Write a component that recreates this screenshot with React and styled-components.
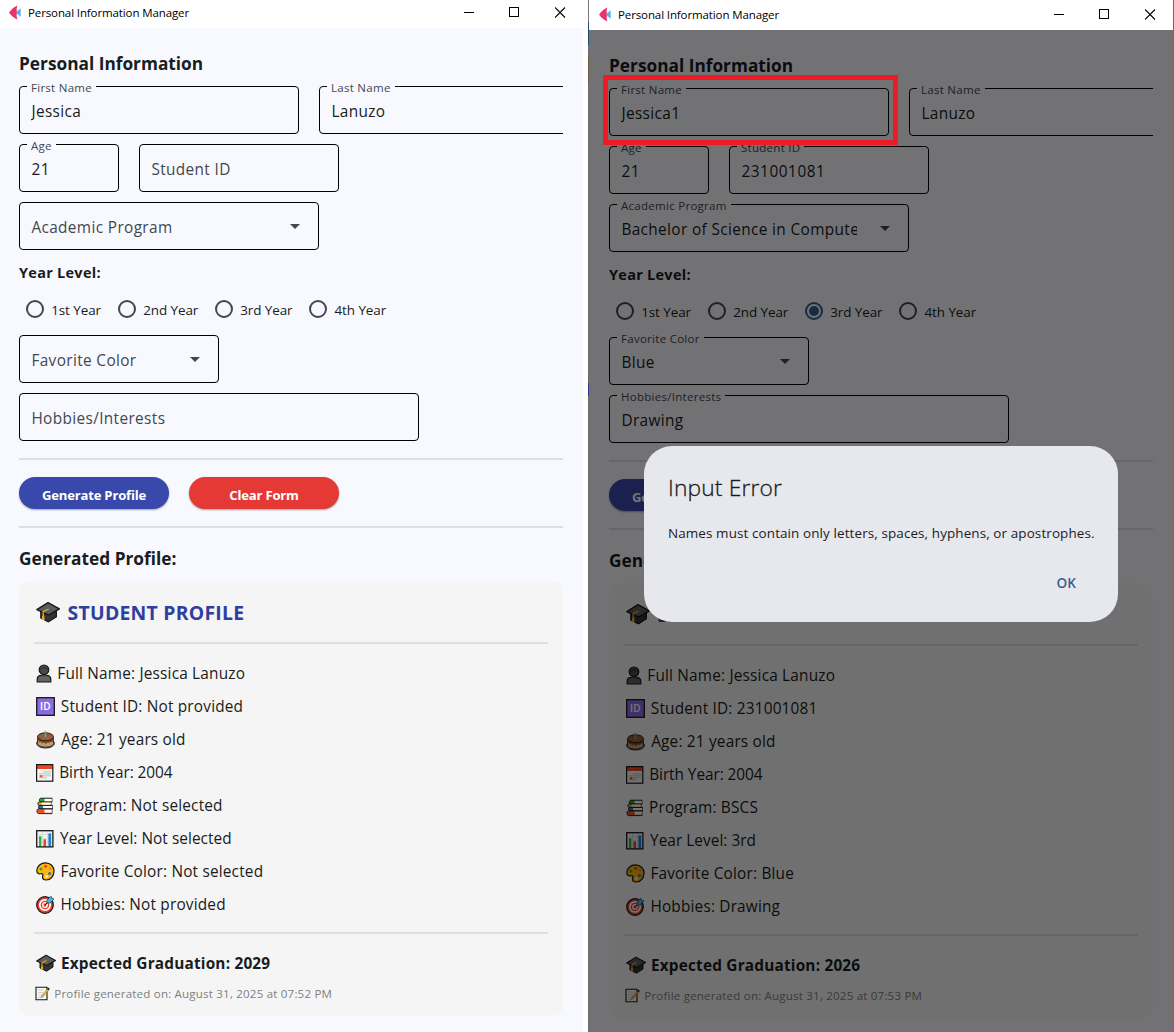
import React from "react";
import styled, { createGlobalStyle, css } from "styled-components";

const Global = createGlobalStyle`
  * { box-sizing: border-box; }
  body { margin: 0; background: #ffffff; }
`;

const Screen = styled.main`
  position: relative;
  display: flex;
  gap: 5px;
  width: 1174px;
  height: 1032px;
  overflow: hidden;
  background: #ffffff;
  color: #191c20;
  font-family: "Open Sans", "Noto Sans", sans-serif;
  font-weight: 400;
  white-space: nowrap;
`;

const WindowFrame = styled.section`
  display: flex;
  flex-direction: column;
  width: ${(p) => (p.$framed ? 586 : 583)}px;
  height: 1032px;
  flex: none;
  ${(p) =>
    p.$framed &&
    css`
      padding: 0 1px 0 1px;
      background:
        linear-gradient(#6b6b6e, #6b6b6e) right / 1px 100% no-repeat,
        linear-gradient(
          #77777a 0 22px,
          #1d4c74 22px 45px,
          #6b6b6e 45px 55px,
          #6f5a44 55px 83px,
          #6b6b6e 83px 383px,
          #33388a 383px 396px,
          #6b6b6e 396px
        );
    `}
`;

const TitleBar = styled.header`
  display: flex;
  align-items: center;
  flex: none;
  height: ${(p) => (p.$framed ? 30 : 28)}px;
  padding: 0 0 ${(p) => (p.$framed ? 1 : 3)}px ${(p) => (p.$framed ? 10 : 9)}px;
  background: #ffffff;
  color: #000000;
`;

const TitleText = styled.span`
  flex: 1;
  margin-left: 7px;
  font-size: 11.52px;
  letter-spacing: -0.12px;
  line-height: 16px;
`;

const ControlButton = styled.span`
  display: flex;
  justify-content: center;
  align-items: center;
  width: 46px;
  height: 25px;
`;

const Page = styled.div`
  position: relative;
  display: flex;
  flex-direction: column;
  gap: 10px;
  flex: 1;
  min-height: 0;
  overflow: hidden;
  padding: 23px 20px 0 ${(p) => (p.$framed ? 20 : 19)}px;
  background: #f8f9ff;
`;

const Scrim = styled.div`
  position: absolute;
  inset: 0;
  background: rgba(0, 0, 0, 0.54);
`;

const Heading = styled.h2`
  margin: 0;
  height: ${(p) => p.$h}px;
  line-height: ${(p) => p.$h + (p.$drop || 0)}px;
  font-size: ${(p) => p.$size}px;
  font-weight: 700;
  letter-spacing: ${(p) => p.$ls || 0}px;
`;

const FieldRow = styled.div`
  display: flex;
  gap: 20px;
  height: 48px;
  width: 544px;
  ${(p) => p.$clipped && "overflow-x: clip;"}
`;

const FieldBox = styled.div`
  position: relative;
  display: flex;
  align-items: center;
  justify-content: space-between;
  flex: none;
  width: ${(p) => p.$w}px;
  height: 48px;
  padding: 3px 18px 0 11.4px;
  border: 1px solid #000000;
  border-radius: 4px;
`;

const FloatingLabel = styled.span`
  position: absolute;
  left: 7px;
  top: -8px;
  padding: 0 4px;
  background: #f8f9ff;
  color: #43474e;
  font-size: 11.52px;
  letter-spacing: 0.27px;
  line-height: 18px;
`;

const FieldText = styled.span`
  overflow: hidden;
  color: ${(p) => (p.$hint ? "#43474e" : "#191c20")};
  font-size: 15.36px;
  letter-spacing: ${(p) => (p.$digits ? 0.55 : 0.37)}px;
  line-height: 24px;
  ${(p) => p.$clip && `width: ${p.$clip}px;`}
`;

const ArrowIcon = styled.svg`
  flex: none;
  width: 10px;
  height: 5px;
  margin-top: -2px;
`;

const RadioGroup = styled.div`
  display: grid;
  grid-template-columns: 92px 97px 94.3px auto;
  align-items: center;
  height: 32px;
`;

const RadioOption = styled.label`
  display: flex;
  align-items: center;
  padding-left: 7px;
  font-size: 13.44px;
  letter-spacing: -0.08px;
  line-height: 20px;
`;

const RadioDot = styled.span`
  display: flex;
  align-items: center;
  justify-content: center;
  width: 18px;
  height: 18px;
  margin-right: 7.2px;
  border: 2px solid ${(p) => (p.$on ? "#36618e" : "#43474e")};
  border-radius: 50%;
  &::after {
    content: "";
    width: 10px;
    height: 10px;
    border-radius: 50%;
    background: ${(p) => (p.$on ? "#36618e" : "transparent")};
  }
`;

const RadioText = styled.span`
  padding-top: 2px;
`;

const Divider = styled.hr`
  flex: none;
  width: 100%;
  height: 2px;
  margin: ${(p) => p.$m || "7px 0"};
  border: 0;
  background: #dedfe5;
`;

const ButtonRow = styled.div`
  display: flex;
  gap: 20px;
`;

const PillButton = styled.button`
  width: 150px;
  height: 32px;
  padding: 3px 0 0;
  border: 0;
  border-radius: 16px;
  background: ${(p) => p.$bg};
  color: #ffffff;
  box-shadow: 0 1px 2px rgba(0, 0, 0, 0.35);
  font-family: inherit;
  font-size: 13.1px;
  font-weight: 700;
  letter-spacing: -0.2px;
`;

const ProfileCard = styled.article`
  display: flex;
  flex-direction: column;
  flex: none;
  width: 544px;
  height: 435px;
  padding: 15px;
  border-radius: 10px;
  background: #f5f5f5;
`;

const ProfileTitle = styled.h3`
  display: flex;
  align-items: center;
  flex: none;
  margin: 0 0 14px;
  height: 32px;
  padding-left: 2px;
  color: #303f9f;
  font-size: 19.4px;
  font-weight: 700;
  letter-spacing: 0.24px;
`;

const InfoLine = styled.div`
  display: flex;
  align-items: center;
  flex: none;
  height: 33px;
  font-size: 15.36px;
  letter-spacing: ${(p) => (p.$ls === undefined ? 0.19 : p.$ls)}px;
`;

const GraduationLine = styled(InfoLine)`
  height: 30px;
  font-weight: 700;
`;

const StampLine = styled(InfoLine)`
  height: 16px;
  margin-top: 7px;
  color: #808080;
  font-size: 11.52px;
  letter-spacing: 0.21px;
`;

const IconSlot = styled.span`
  display: flex;
  align-items: center;
  flex: none;
  width: ${(p) => p.$w}px;
  padding-left: ${(p) => (p.$pad === undefined ? 2 : p.$pad)}px;
`;

const Glyph = styled.svg`
  flex: none;
  width: ${(p) => p.$w || 20}px;
  height: ${(p) => p.$h || p.$w || 20}px;
`;

const Highlight = styled.div`
  position: absolute;
  left: 603px;
  top: 75px;
  width: 295px;
  height: 70px;
  border: 5px solid #ed1c24;
`;

const Dialog = styled.div`
  position: absolute;
  left: 644px;
  top: 446px;
  display: flex;
  flex-direction: column;
  width: 474px;
  height: 176px;
  padding: 24px 24px 19px;
  border-radius: 28px;
  background: #e7e8ee;
`;

const DialogTitle = styled.h2`
  margin: 0;
  font-size: 22.8px;
  font-weight: 300;
  letter-spacing: 0.15px;
  line-height: 36px;
  -webkit-text-stroke: 0.3px #191c20;
`;

const DialogText = styled.p`
  margin: 17px 0 0;
  font-size: 13.44px;
  letter-spacing: 0.11px;
  line-height: 20px;
`;

const DialogActions = styled.div`
  display: flex;
  justify-content: flex-end;
  margin-top: auto;
`;

const TextButton = styled.button`
  padding: 0 18px;
  border: 0;
  background: transparent;
  color: #36618e;
  font-family: inherit;
  font-size: 13.6px;
  font-weight: 600;
  line-height: 40px;
`;

const K = "#161616";

const AppLogo = () => (
  <Glyph $w={12} $h={15} viewBox="0 0 12 15">
    <path d="M8.300.4C4.500 2.400 1.500 5 .1 7.500c1.400 2.500 4.400 5.100 8.200 7.100L7.500 10.500V4.500Z" fill="#ee3167" />
    <path d="M6.500 7.500 11.700 3.200v8.600Z" fill="#54b4e4" />
    <path d="M4 3.500 7.500 4.500v6L4 11.500Z" fill="#ee3167" />
  </Glyph>
);

const Cap = ({ w = 20 }) => (
  <Glyph $w={w} $h={w} viewBox="0 0 20 20" stroke={K} strokeLinejoin="round">
    <path d="M4 9v6l6.500 3.200L17 14V8.500Z" fill="#333" strokeWidth="1" />
    <path d="M10 2.200 19.500 7.400 10.500 12.600 .7 8Z" fill="#5c5c5c" strokeWidth="1.100" />
    <path d="M10.500 7.500 6 9.700v4" fill="none" stroke="#e9a820" strokeWidth="1.100" />
    <path d="M5.100 13.200h1.800l.3 3.400H4.800Z" fill="#e9a820" stroke="none" />
  </Glyph>
);

const Person = () => (
  <Glyph $w={17} $h={19} viewBox="0 0 17 19" stroke={K} strokeWidth="1.2">
    <path d="M1.2 18v-2.6c0-3 2-4 4.3-4h5c2.300 0 4.300 1 4.300 4V18Z" fill="#636363" />
    <path d="M6 9.500h4v3H6Z" fill="#4a4a4a" stroke="none" />
    <circle cx="8" cy="5.800" r="4.800" fill="#4b4b4b" />
    <path d="M4.500 5.200C6 5.500 7.500 4 8 3c1 1.500 2.500 2 3.800 2.100" fill="none" strokeWidth=".8" />
  </Glyph>
);

const IdText = styled.text`
  font: 600 10px "Open Sans", sans-serif;
  letter-spacing: 0.3px;
`;

const IdBadge = () => (
  <Glyph $w={19} viewBox="0 0 19 19">
    <rect x=".7" y=".7" width="17.600" height="17.600" fill="#8a6be0" stroke={K} strokeWidth="1.300" />
    <IdText x="9.500" y="13.100" textAnchor="middle" fill="#fff">ID</IdText>
  </Glyph>
);

const Cake = () => (
  <Glyph $w={19} viewBox="0 0 19 19">
    <ellipse cx="9.500" cy="13.300" rx="8.900" ry="4.700" fill="#d9d9d9" stroke={K} />
    <path d="M1.500 8v5.500c0 2 3.500 3.600 8 3.600s8-1.600 8-3.600V8Z" fill="#c79a6e" stroke={K} strokeWidth=".8" />
    <path d="M1.500 7.600v3l1.800 1v1l1.500-.6 1.600 1.500 1.800-1 1.500 1.800 1.800-1.800 1.800.6 1.500-1.300 1.500.3 1.300-1.500v-3Z" fill="#7a4a2c" />
    <ellipse cx="9.500" cy="6.800" rx="8" ry="4" fill="#925c36" stroke={K} strokeWidth=".9" />
    <path d="M9.500 2.500v5" stroke="#37b6d8" strokeWidth="1.600" />
    <circle cx="9.500" cy="1.400" r="1" fill="#f5a623" />
    <g fill="#d86a3c"><circle cx="5.500" cy="6.500" r=".6" /><circle cx="13.300" cy="6.500" r=".6" /><circle cx="7.300" cy="8.700" r=".6" /><circle cx="11.700" cy="8.700" r=".6" /></g>
  </Glyph>
);

const Calendar = () => (
  <Glyph $w={18} $h={18} viewBox="0 0 18 18">
    <rect x=".6" y=".6" width="16.200" height="16.600" fill="#f6f6f6" />
    <rect x="1" y="1" width="15.500" height="4" fill="#ee4423" />
    <g fill="#a8a8a8">
      {[7.2, 9.2, 11.2, 13.2].map((y, r) =>
        [3.4, 5.4, 7.4, 9.4, 11.4, 13.4].map((x, c) =>
          (r === 0 && c < 2) || (r === 3 && c > 3) ? null : <rect key={x + "-" + y} x={x} y={y} width="1.200" height="1.200" />
        )
      )}
    </g>
    <circle cx="5.200" cy="12.200" r="1.300" fill="#ee5533" />
    <rect x=".6" y=".6" width="16.200" height="16.600" fill="none" stroke={K} strokeWidth="1.200" />
  </Glyph>
);

const Books = () => (
  <Glyph $w={18} $h={18} viewBox="0 0 18 18" strokeLinejoin="round">
    <g stroke={K} strokeWidth=".9">
      <path d="M16 1.200H5C2.800 1.200 2.800 5 5 5h11Z" fill="#2aa32c" />
      <path d="M15 5H3C1.500 5 1.500 8.400 3 8.400h12Z" fill="#e9a820" />
      <path d="M16.500 8.400H4c-1.900 0-1.900 3.400 0 3.400h12.500Z" fill="#1d78cf" />
      <path d="M16 11.800H2.500c-2 0-2 4.800 0 4.800H16Z" fill="#e8551b" />
    </g>
    <g fill="#fff">
      <path d="M15.800 1.900H8.500v2.400h7.300Z" />
      <path d="M14.800 5.600H5.500v2.100h9.300Z" />
      <path d="M16.300 9H7v2.100h9.300Z" />
      <path d="M15.800 12.700H8.500v3h7.300Z" />
    </g>
  </Glyph>
);

const Chart = () => (
  <Glyph $w={18} $h={18} viewBox="0 0 18 18">
    <rect x=".7" y=".7" width="16.200" height="16.200" fill="#f2f2f2" />
    <path d="M1 4.500h16M1 8.500h16M1 12.500h16M6.500 1v16M11.500 1v16" stroke="#d0d0d0" strokeWidth=".6" />
    <path d="M3 6.200h2.400v10.400H3Z" fill="#2fb534" />
    <path d="M7.500 9.300H10v7.300H7.500Z" fill="#ea4335" />
    <path d="M12.400 3.400h2.700v13.200h-2.700Z" fill="#1e7fd6" />
    <rect x=".7" y=".7" width="16.200" height="16.200" fill="none" stroke={K} strokeWidth="1.300" />
  </Glyph>
);

const Palette = () => (
  <Glyph $w={19} viewBox="0 0 19 19">
    <path d="M9.500.8C14.500.8 18 4.500 18 9c0 4.800-3 9-7.800 9-2.400 0-3.700-1-3.700-2.700 0-1.500.9-2.400.2-3.200-1-1.100-2.300.3-4.100-.4C1 11 .7 9.800.8 8.300 1.200 4 4.800.8 9.500.8Z" fill="#fbb613" stroke={K} strokeWidth="1.200" />
    <circle cx="5" cy="7" r="1.500" fill="#2faa35" />
    <circle cx="9.600" cy="4.300" r="1.500" fill="#e8432c" />
    <circle cx="14.200" cy="6.600" r="1.400" fill="#ee8a1a" />
    <circle cx="13.600" cy="11.600" r="1.500" fill="#1f6fe0" />
    <circle cx="10.400" cy="14.600" r="1.400" fill="#fff3c4" />
  </Glyph>
);

const Target = () => (
  <Glyph $w={19} viewBox="0 0 19 19">
    <circle cx="9" cy="10" r="8.300" fill="#e5402a" stroke={K} strokeWidth="1.200" />
    <circle cx="9" cy="10" r="5.200" fill="none" stroke="#fff" strokeWidth="1.700" />
    <circle cx="9" cy="10" r="2.300" fill="none" stroke="#fff" strokeWidth="1.300" />
    <path d="M9 10 12.500 6.500" stroke={K} strokeWidth="1" />
    <path d="M11 8.200V5.200L15 1.200l.8 2 2.200.8-4 4Z" fill="#45b8e0" stroke="#12506a" strokeWidth=".8" />
  </Glyph>
);

const Memo = () => (
  <Glyph $w={15} $h={15} viewBox="0 0 15 15">
    <path d="M1 1.200h11v12.600H1Z" fill="#f8f8f8" stroke={K} strokeWidth="1.100" />
    <path d="M3 4h6M3 6.500h5M3 9h3.500M3 11.500h3" stroke="#c4c4c4" strokeWidth=".8" />
    <path d="M6.500 9.800 12.600 2.400l1.600 1.300L8 10.800l-2 .8Z" fill="#f3b52a" stroke="#333" strokeWidth=".3" />
    <path d="m12 3 1.200-1.500 1.600 1.300L13.600 4.300Z" fill="#222" />
  </Glyph>
);

const WindowControls = () => (
  <>
    <ControlButton>
      <Glyph $w={11} viewBox="0 0 11 11"><path d="M1 5.500h10" stroke="#000" /></Glyph>
    </ControlButton>
    <ControlButton>
      <Glyph $w={11} viewBox="0 0 11 11"><rect x=".5" y=".5" width="9" height="9" fill="none" stroke="#000" /></Glyph>
    </ControlButton>
    <ControlButton>
      <Glyph $w={11} viewBox="0 0 11 11"><path d="m0 .5 10 10M10 .5l-10 10" stroke="#000" strokeWidth="1.100" /></Glyph>
    </ControlButton>
  </>
);

function Field({ label, value, w, select, clip, digits }) {
  return (
    <FieldBox $w={w}>
      {value && <FloatingLabel>{label}</FloatingLabel>}
      <FieldText $hint={!value} $clip={clip} $digits={digits}>{value || label}</FieldText>
      {select && (
        <ArrowIcon viewBox="0 0 10 5"><path d="M0 0h10L5 5Z" fill="#43474e" /></ArrowIcon>
      )}
    </FieldBox>
  );
}

const YEARS = ["1st", "2nd", "3rd", "4th"];

function ManagerWindow({ data, framed }) {
  const rows = [
    [Person, 23.3, "Full Name: Jessica Lanuzo"],
    [IdBadge, 26.8, "Student ID: " + (data.studentId || "Not provided")],
    [Cake, 27.2, "Age: 21 years old"],
    [Calendar, 25.2, "Birth Year: 2004", -0.05],
    [Books, 25, "Program: " + (data.programCode || "Not selected")],
    [Chart, 26, "Year Level: " + (data.year || "Not selected"), 0.05],
    [Palette, 26.4, "Favorite Color: " + (data.color || "Not selected")],
    [Target, 26.4, "Hobbies: " + (data.hobbies || "Not provided")],
  ];
  return (
    <WindowFrame $framed={framed}>
      <TitleBar $framed={framed}>
        <AppLogo />
        <TitleText>Personal Information Manager</TitleText>
        <WindowControls />
      </TitleBar>
      <Page $framed={framed}>
        <Heading $h={25} $size={17.28}>Personal Information</Heading>
        <FieldRow $clipped>
          <Field label="First Name" value={data.firstName} w={280} />
          <Field label="Last Name" value="Lanuzo" w={280} />
        </FieldRow>
        <FieldRow>
          <Field label="Age" value="21" w={100} digits />
          <Field label="Student ID" value={data.studentId} w={200} digits={!!data.studentId} />
        </FieldRow>
        <FieldRow>
          <Field label="Academic Program" value={data.program} w={300} select clip={236} />
        </FieldRow>
        <Heading $h={23} $drop={2} $size={14.5} $ls={0.27}>Year Level:</Heading>
        <RadioGroup>
          {YEARS.map((y) => (
            <RadioOption key={y}>
              <RadioDot $on={data.year === y} />
              <RadioText>{y} Year</RadioText>
            </RadioOption>
          ))}
        </RadioGroup>
        <FieldRow>
          <Field label="Favorite Color" value={data.color} w={200} select />
        </FieldRow>
        <FieldRow>
          <Field label="Hobbies/Interests" value={data.hobbies} w={400} />
        </FieldRow>
        <Divider />
        <ButtonRow>
          <PillButton $bg="#3949ab">Generate Profile</PillButton>
          <PillButton $bg="#e53935">Clear Form</PillButton>
        </ButtonRow>
        <Divider />
        <Heading $h={26} $drop={2} $size={17.28}>Generated Profile:</Heading>
        <ProfileCard>
          <ProfileTitle>
            <IconSlot $w={31.6} $pad={0}><Cap w={24} /></IconSlot>
            STUDENT PROFILE
          </ProfileTitle>
          <Divider $m="0 0 13px" />
          {rows.map(([Icon, w, text, ls]) => (
            <InfoLine key={text} $ls={ls}>
              <IconSlot $w={w}><Icon /></IconSlot>
              {text}
            </InfoLine>
          ))}
          <Divider $m="11px 0 14px" />
          <GraduationLine>
            <IconSlot $w={27}><Cap w={20} /></IconSlot>
            Expected Graduation: {data.graduation}
          </GraduationLine>
          <StampLine>
            <IconSlot $w={20.3} $pad={1}><Memo /></IconSlot>
            Profile generated on: August 31, 2025 at {data.time}
          </StampLine>
        </ProfileCard>
        {framed && <Scrim />}
      </Page>
    </WindowFrame>
  );
}

const EMPTY = { firstName: "Jessica", graduation: "2029", time: "07:52 PM" };
const FILLED = {
  firstName: "Jessica1",
  studentId: "231001081",
  program: "Bachelor of Science in Computer Science",
  programCode: "BSCS",
  year: "3rd",
  color: "Blue",
  hobbies: "Drawing",
  graduation: "2026",
  time: "07:53 PM",
};

export default function App() {
  return (
    <Screen>
      <Global />
      <ManagerWindow data={EMPTY} />
      <ManagerWindow data={FILLED} framed />
      <Highlight />
      <Dialog>
        <DialogTitle>Input Error</DialogTitle>
        <DialogText>Names must contain only letters, spaces, hyphens, or apostrophes.</DialogText>
        <DialogActions>
          <TextButton>OK</TextButton>
        </DialogActions>
      </Dialog>
    </Screen>
  );
}
